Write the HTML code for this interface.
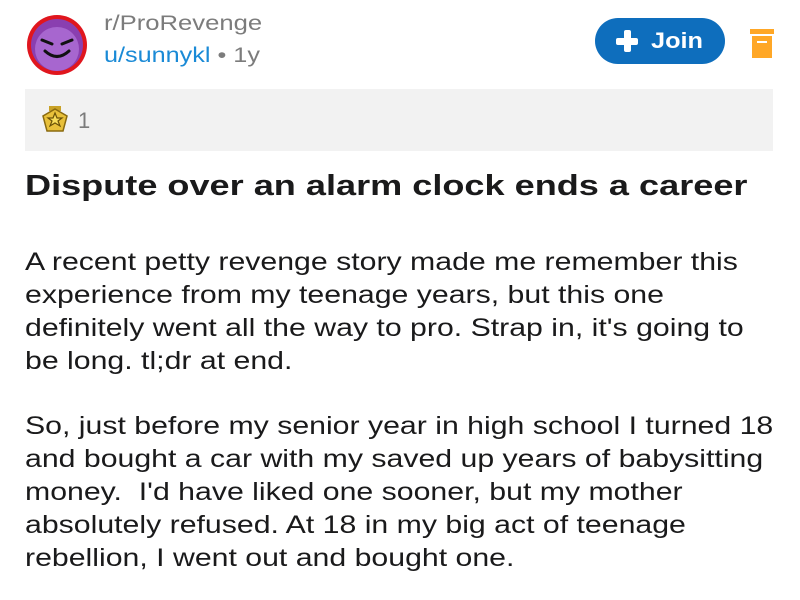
<!DOCTYPE html>
<html><head><meta charset="utf-8"><style>
body{margin:0;width:800px;height:600px;background:#fff;font-family:"Liberation Sans",sans-serif;overflow:hidden;position:relative}
.a{position:absolute;white-space:nowrap}
.s{transform-origin:0 0}
.body{font-size:25px;color:#1a1a1b;line-height:33px;transform:scaleX(1.21)}
</style></head><body>
<svg class="a" style="left:26px;top:14px" width="62" height="62" viewBox="0 0 62 62">
<circle cx="31" cy="31" r="30" fill="#e0161e"/>
<circle cx="31" cy="31" r="26" fill="#8a3fb0"/>
<circle cx="31" cy="35" r="22" fill="#a766cf"/>
<path d="M16 26 L26 30 M46 26 L36 30" stroke="#111" stroke-width="3" stroke-linecap="round"/>
<path d="M19 37 Q31 48 43 37" stroke="#111" stroke-width="3" fill="none" stroke-linecap="round"/>
</svg>
<div class="a s" style="left:104px;top:12px;font-size:21px;color:#7c7c7c;transform:scaleX(1.22)">r/ProRevenge</div>
<div class="a s" style="left:104px;top:44px;font-size:21px;color:#1a8ad6;transform:scaleX(1.2)">u/sunnykl <span style="color:#7c7c7c">• 1y</span></div>
<div class="a" style="left:595px;top:18px;width:130px;height:46px;border-radius:23px;background:#0e6ebd;color:#fff;font-weight:bold;font-size:22px;line-height:46px">
<span style="position:absolute;left:21px;top:12px;width:22px;height:22px"><span style="position:absolute;left:7.5px;top:0;width:7px;height:22px;background:#fff;border-radius:2px"></span><span style="position:absolute;left:0;top:7.5px;width:22px;height:7px;background:#fff;border-radius:2px"></span></span>
<span class="s" style="position:absolute;left:56px;display:inline-block;transform:scaleX(1.15)">Join</span></div>
<div class="a" style="left:750px;top:29px;width:24px;height:5px;background:#ffa726"></div>
<div class="a" style="left:752px;top:36px;width:20px;height:22px;background:#ffa726"></div>
<div class="a" style="left:757px;top:41px;width:10px;height:2px;background:#fff"></div>
<div class="a" style="left:25px;top:89px;width:748px;height:62px;background:#f2f2f2"></div>
<svg class="a" style="left:41px;top:104px" width="28" height="30" viewBox="0 0 28 30">
<rect x="8" y="2" width="12" height="5" fill="#c9a227"/>
<path d="M14 5 L26 12 L22 27 L6 27 L2 12 Z" fill="#e8c03a" stroke="#8a6a10" stroke-width="1.5"/>
<path d="M14 9 L16 14 L21 14 L17 17 L19 22 L14 19 L9 22 L11 17 L7 14 L12 14 Z" fill="#f7dc5a" stroke="#6b5208" stroke-width="1.2"/>
</svg>
<div class="a" style="left:78px;top:108px;font-size:22px;color:#7c7c7c">1</div>
<div class="a s" style="left:25px;top:170px;font-size:29px;font-weight:bold;color:#1a1a1b;transform:scaleX(1.245)">Dispute over an alarm clock ends a career</div>
<div class="a body s" style="left:25px;top:246px">A recent petty revenge story made me remember this<br>experience from my teenage years, but this one<br>definitely went all the way to pro. Strap in, it's going to<br>be long. tl;dr at end.</div>
<div class="a body s" style="left:25px;top:410px">So, just before my senior year in high school I turned 18<br>and bought a car with my saved up years of babysitting<br>money.&nbsp; I'd have liked one sooner, but my mother<br>absolutely refused. At 18 in my big act of teenage<br>rebellion, I went out and bought one.</div>
</body></html>
